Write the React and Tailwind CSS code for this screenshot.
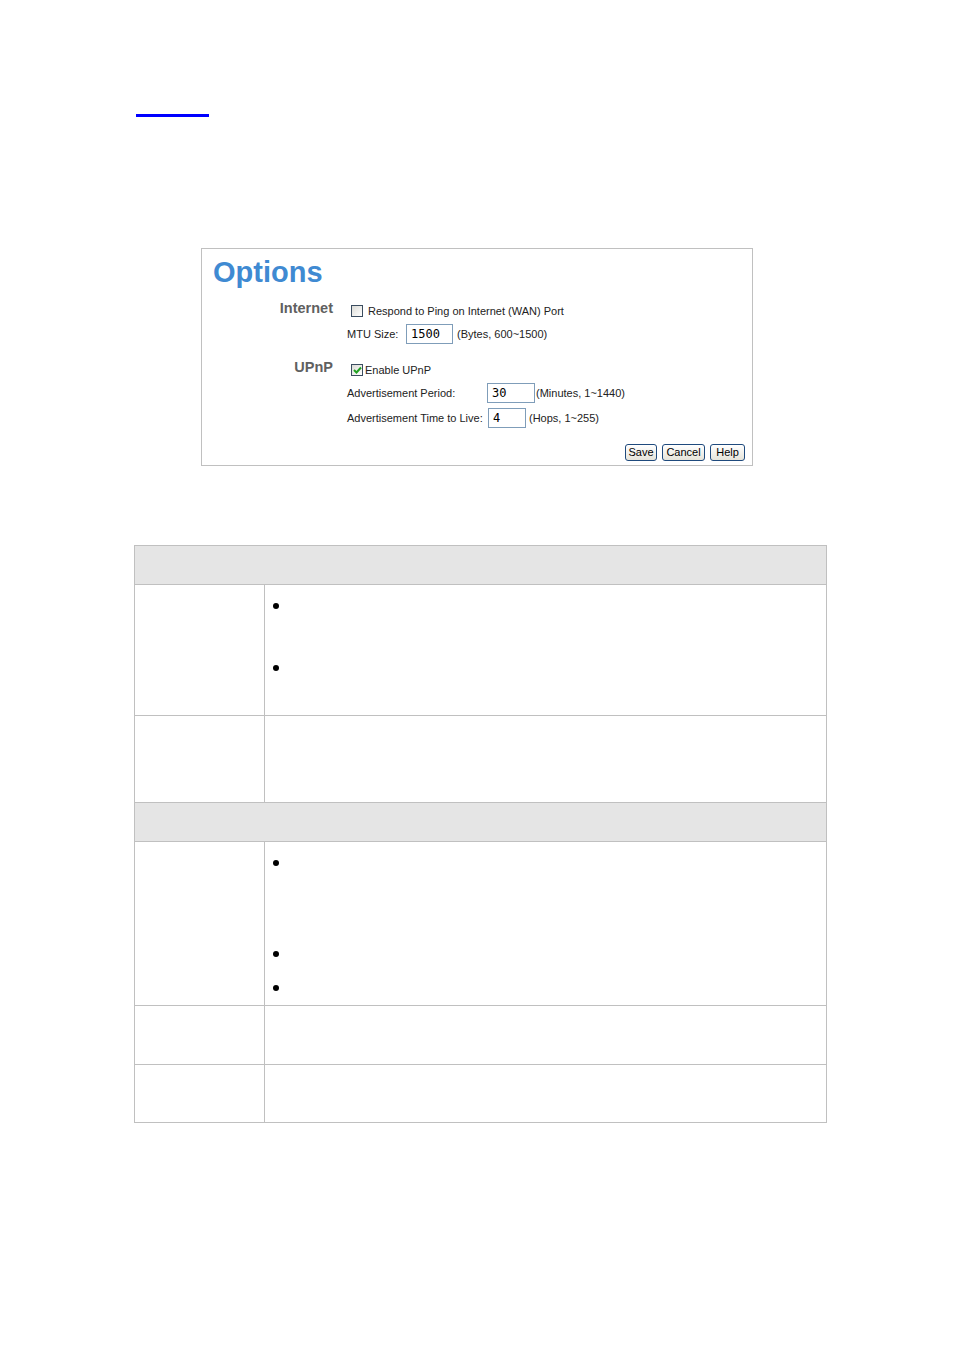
import React from "react";

const ctl = "font-['Liberation_Sans',Arial,sans-serif] text-[11px] text-[#222]";

const Checkbox = ({ checked }) => (
  <span className="w-[12px] h-[12px] border border-[#3b4d60] bg-gradient-to-br from-[#dcdcd7] to-white flex items-center justify-center shrink-0">
    {checked && (
      <svg width="9" height="8" viewBox="0 0 9 8">
        <path d="M1 4 L3.5 6.5 L8 1.5" fill="none" stroke="#21a121" strokeWidth="2" />
      </svg>
    )}
  </span>
);

const TextBox = ({ value, width }) => (
  <span
    className={`${width} h-[20px] border border-[#7f9db9] bg-white flex items-center pl-[4px] font-['DejaVu_Sans_Mono',monospace] text-[12px] text-black shrink-0`}
  >
    {value}
  </span>
);

const Btn = ({ label, width }) => (
  <button
    className={`${width} h-[17px] border border-[#1f4a7d] rounded-[3px] bg-gradient-to-b from-white to-[#e6e4da] text-[11px] leading-none text-black font-['Liberation_Sans',Arial,sans-serif] flex items-center justify-center`}
  >
    {label}
  </button>
);

const SectionLabel = ({ children }) => (
  <div className="w-[132px] text-right pr-[1px] font-['Liberation_Sans',Arial,sans-serif] font-bold text-[14.5px] leading-[16px] text-[#606060]">
    {children}
  </div>
);

const Bullet = ({ className = "" }) => (
  <span className={`block w-[6px] h-[6px] rounded-full bg-black ml-[8px] ${className}`}></span>
);

const App = () => {
  return (
    <div className="w-[954px] min-h-[1350px] bg-white pt-[114px]">
      {/* link underline */}
      <div className="ml-[136px] w-[73px] h-[3px] bg-[#0000ff]"></div>

      {/* Options panel */}
      <div className="ml-[201px] mt-[131px] w-[552px] h-[218px] border border-[#c0c0c0] pt-[9px] flex flex-col">
        <div className="ml-[11px] font-['Liberation_Sans',Arial,sans-serif] font-bold text-[29px] leading-[29px] text-[#3f8ad2]">
          Options
        </div>

        {/* Internet */}
        <div className="mt-[13px] h-[22px] flex items-start">
          <SectionLabel>Internet</SectionLabel>
          <div className={`ml-[13px] h-[22px] flex items-center ${ctl}`}>
            <span className="ml-[4px]">
              <Checkbox />
            </span>
            <span className="ml-[5px]">Respond to Ping on Internet (WAN) Port</span>
          </div>
        </div>
        <div className={`mt-[2px] h-[20px] flex items-center pl-[145px] ${ctl}`}>
          <span className="w-[59px]">MTU Size:</span>
          <TextBox value="1500" width="w-[47px]" />
          <span className="ml-[4px]">(Bytes, 600~1500)</span>
        </div>

        {/* UPnP */}
        <div className="mt-[15px] h-[22px] flex items-start">
          <SectionLabel>UPnP</SectionLabel>
          <div className={`ml-[13px] h-[22px] flex items-center ${ctl}`}>
            <span className="ml-[4px]">
              <Checkbox checked />
            </span>
            <span className="ml-[2px]">Enable UPnP</span>
          </div>
        </div>
        <div className={`mt-[1px] h-[22px] flex items-center pl-[145px] ${ctl}`}>
          <span className="w-[140px]">Advertisement Period:</span>
          <TextBox value="30" width="w-[48px]" />
          <span className="ml-[1px]">(Minutes, 1~1440)</span>
        </div>
        <div className={`mt-[3px] h-[22px] flex items-center pl-[145px] ${ctl}`}>
          <span className="w-[141px]">Advertisement Time to Live:</span>
          <TextBox value="4" width="w-[38px]" />
          <span className="ml-[3px]">(Hops, 1~255)</span>
        </div>

        <div className="mt-[15px] flex justify-end gap-[5px] pr-[7px]">
          <Btn label="Save" width="w-[32px]" />
          <Btn label="Cancel" width="w-[43px]" />
          <Btn label="Help" width="w-[35px]" />
        </div>
      </div>

      {/* Description table */}
      <div className="ml-[134px] mt-[79px] w-[693px] border border-[#c0c0c0]">
        <div className="h-[39px] bg-[#e5e5e5] border-b border-[#c0c0c0]"></div>

        <div className="grid grid-cols-[130px_1fr] border-b border-[#c0c0c0]">
          <div className="h-[130px] border-r border-[#c0c0c0]"></div>
          <div className="pt-[18px]">
            <Bullet />
            <Bullet className="mt-[56px]" />
          </div>
        </div>

        <div className="grid grid-cols-[130px_1fr] border-b border-[#c0c0c0]">
          <div className="h-[86px] border-r border-[#c0c0c0]"></div>
          <div></div>
        </div>

        <div className="h-[39px] bg-[#e5e5e5] border-b border-[#c0c0c0]"></div>

        <div className="grid grid-cols-[130px_1fr] border-b border-[#c0c0c0]">
          <div className="h-[163px] border-r border-[#c0c0c0]"></div>
          <div className="pt-[18px]">
            <Bullet />
            <Bullet className="mt-[85px]" />
            <Bullet className="mt-[28px]" />
          </div>
        </div>

        <div className="grid grid-cols-[130px_1fr] border-b border-[#c0c0c0]">
          <div className="h-[58px] border-r border-[#c0c0c0]"></div>
          <div></div>
        </div>

        <div className="grid grid-cols-[130px_1fr]">
          <div className="h-[57px] border-r border-[#c0c0c0]"></div>
          <div></div>
        </div>
      </div>
    </div>
  );
};

export default App;
